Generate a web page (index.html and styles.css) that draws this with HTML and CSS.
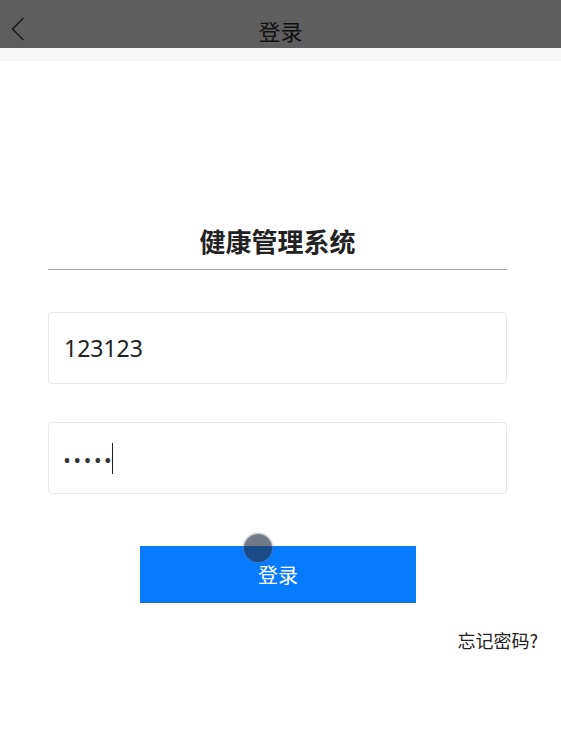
FILE: index.html
```html
<!DOCTYPE html>
<html lang="zh-CN">
<head>
    <meta charset="UTF-8">
    <meta name="viewport" content="width=device-width, initial-scale=1.0">
    <title>登录 - 健康管理系统</title>
    <link rel="stylesheet" href="styles.css">
</head>
<body>
    <header class="top-bar">
        <a href="#" class="back-btn">
            <svg width="14" height="24" viewBox="0 0 14 24">
                <path d="M12.5 1 L1.5 12 L12.5 23" fill="none" stroke="#1e1e1e" stroke-width="1.6"/>
            </svg>
        </a>
        <div class="top-title">登录</div>
    </header>
    <div class="top-strip"></div>

    <div class="login-box">
        <h1 class="sys-title">健康管理系统</h1>
        <div class="field">
            <input type="text" class="field-input" value="123123">
        </div>
        <div class="field">
            <div class="field-input pwd">•••••<span class="caret"></span></div>
        </div>
        <div class="btn-row">
            <button class="login-btn">登录</button>
            <span class="touch-dot"></span>
        </div>
        <div class="forget">忘记密码?</div>
    </div>
</body>
</html>
```

FILE: styles.css
```css
body {
    margin: 0;
    font-family: "Noto Sans", "Noto Sans CJK SC", sans-serif;
    background: #fff;
    color: #222;
}

.top-bar {
    height: 48px;
    background: #5e5e5e;
    display: flex;
    align-items: center;
    justify-content: center;
    position: relative;
}

.back-btn {
    position: absolute;
    left: 11px;
    top: 17px;
    display: block;
    line-height: 0;
}

.top-title {
    font-family: "Noto Sans CJK SC", sans-serif;
    font-size: 22px;
    color: #111;
    margin-top: 12px;
}

.top-strip {
    height: 13px;
    background: #f7f7f7;
}

.login-box {
    margin: 0 54px 0 48px;
}

.sys-title {
    font-family: "Noto Sans CJK SC", sans-serif;
    font-size: 26px;
    font-weight: bold;
    color: #222;
    text-align: center;
    margin: 162px 0 0 0;
    padding-bottom: 10px;
    line-height: 36px;
    border-bottom: 1px solid #aaa;
}

.field {
    margin-top: 42px;
}

.field + .field {
    margin-top: 38px;
}

.field-input {
    box-sizing: border-box;
    display: block;
    width: 100%;
    height: 72px;
    border: 1px solid #e8e8e8;
    border-radius: 4px;
    padding: 0 15px;
    font-family: "Noto Sans", sans-serif;
    font-size: 23px;
    color: #222;
    outline: none;
    background: #fff;
}

.pwd {
    display: flex;
    align-items: center;
    font-size: 16px;
    font-weight: bold;
    letter-spacing: 4.2px;
    color: #333;
    padding-top: 4px;
}

.caret {
    display: inline-block;
    width: 1px;
    height: 31px;
    background: #222;
    margin-left: -3px;
    margin-top: -3px;
}

.btn-row {
    margin-top: 52px;
    display: flex;
    justify-content: center;
    position: relative;
}

.login-btn {
    width: 276px;
    height: 57px;
    background: #077bff;
    color: #fff;
    border: none;
    border-bottom: 1px solid #2a6fb5;
    font-family: "Noto Sans CJK SC", sans-serif;
    font-size: 20px;
    padding-top: 2px;
    margin-left: 1px;
    cursor: pointer;
}

.touch-dot {
    position: absolute;
    left: 196px;
    top: -12px;
    width: 28px;
    height: 28px;
    border-radius: 50%;
    background: rgba(40, 50, 70, 0.65);
    box-shadow: 0 0 2px 1px rgba(120, 120, 120, 0.5);
}

.forget {
    font-family: "Noto Sans CJK SC", sans-serif;
    font-size: 18px;
    color: #222;
    text-align: right;
    margin-right: -31px;
    margin-top: 24px;
}
```
